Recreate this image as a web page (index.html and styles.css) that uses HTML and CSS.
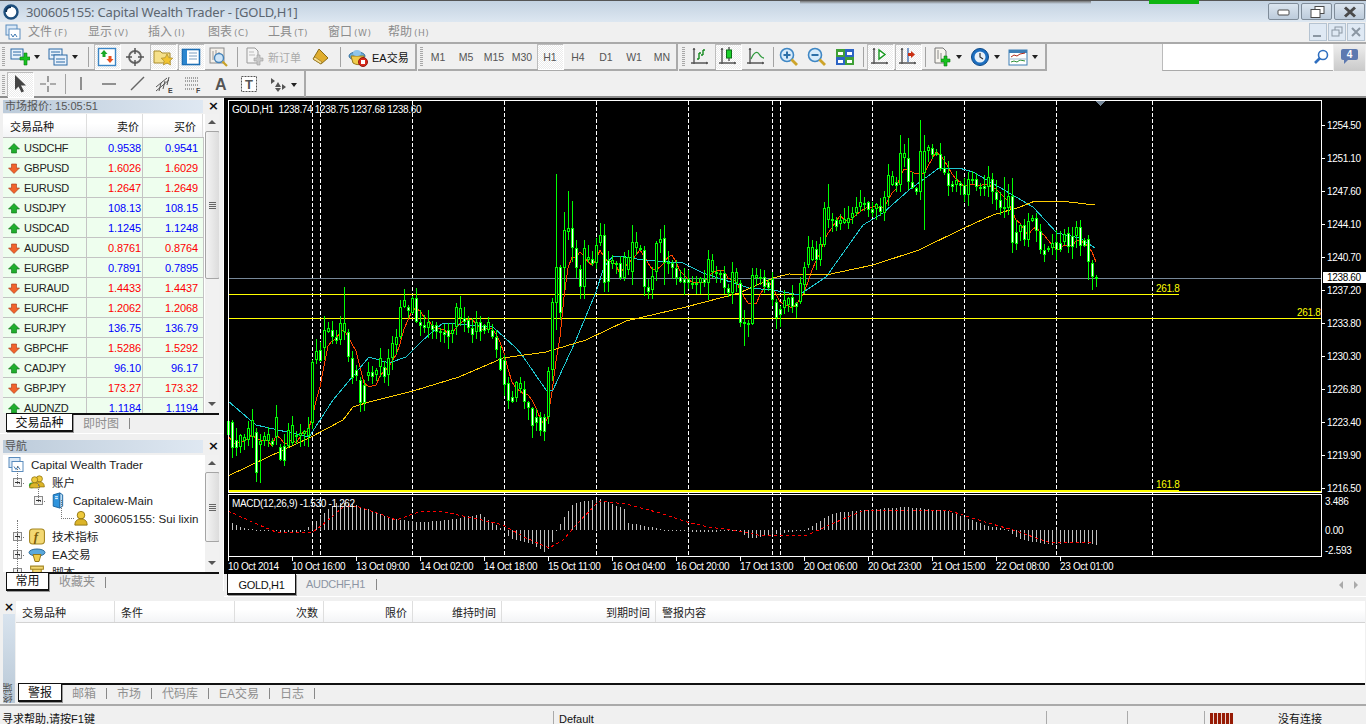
FILE: index.html
```html
<!DOCTYPE html>
<html>
<head>
  <title>Capital Wealth Trader</title>
  <meta charset="utf-8">
  <link rel="stylesheet" href="styles.css">
</head>
<body>
<svg class="defs" width="0" height="0">
  <symbol id="up" viewBox="0 0 12 11"><path d="M6 .5 11.500 6H8.500v4h-5V6H.5z" fill="#1fae2d" stroke="#0d6b18" stroke-width=".6"/></symbol>
  <symbol id="down" viewBox="0 0 12 11"><path d="M6 10.500 11.500 5H8.500V1h-5v4H.5z" fill="#f0642c" stroke="#a8381a" stroke-width=".6"/></symbol>
  <symbol id="minus" viewBox="0 0 9 9"><rect x=".5" y=".5" width="8" height="8" fill="#f4f4f4" stroke="#8a8a8a"/><path d="M2 4.500h5" stroke="#333"/></symbol>
  <symbol id="plus" viewBox="0 0 9 9"><rect x=".5" y=".5" width="8" height="8" fill="#f4f4f4" stroke="#8a8a8a"/><path d="M2 4.500h5M4.500 2v5" stroke="#333"/></symbol>
  <symbol id="person" viewBox="0 0 16 18"><circle cx="8" cy="5.500" r="4" fill="#eec93c" stroke="#8f7310"/><path d="M1.500 16c0-5 3-6.500 6.500-6.500s6.500 1.500 6.500 6.500z" fill="#dcb428" stroke="#8f7310"/></symbol>
  <symbol id="axes" viewBox="0 0 20 20"><path d="M4 1v16M1 16h17" stroke="#555" stroke-width="1.400" fill="none"/><path d="M4 1 2.500 3h3zM18 16l-2-1.500v3z" fill="#555"/></symbol>
</svg>

<div class="titlebar">
  <svg class="app-icon" viewBox="0 0 16 16"><circle cx="8" cy="8" r="6.500" fill="#fff" stroke="#1e4f7d" stroke-width="2.400"/><path d="M3 8a5 5 0 0 1 5-5" stroke="#0e3157" stroke-width="2" fill="none"/></svg>
  <span class="title">300605155: Capital Wealth Trader - [GOLD,H1]</span>
  <span class="top-shadow"></span>
  <span class="green-mark"></span>
  <div class="win-btns">
    <span class="win-btn"><svg viewBox="0 0 30 12"><rect x="9" y="4" width="11" height="5" rx="1" fill="#fff" stroke="#4a4a4a"/></svg></span>
    <span class="win-btn"><svg viewBox="0 0 30 12"><rect x="13" y="0.500" width="9" height="7" fill="#fff" stroke="#4a4a4a"/><rect x="9" y="3.500" width="9" height="8" fill="#fff" stroke="#4a4a4a"/></svg></span>
    <span class="win-btn"><svg viewBox="0 0 30 12"><path d="M10 1.500 20 10.500M20 1.500 10 10.500" stroke="#4a4a4a" stroke-width="3"/></svg></span>
  </div>
</div>

<div class="menubar">
  <svg class="doc-icon" viewBox="0 0 16 16"><rect x="1" y="1" width="11" height="10" fill="#dbe9f7" stroke="#5b8cbd"/><rect x="4" y="5" width="11" height="10" fill="#fff" stroke="#5b8cbd"/><path d="M6 10l2 3 2-3 2 3" stroke="#3d77b0" fill="none"/></svg>
  <span class="menu">文件<small>(F)</small></span>
  <span class="menu">显示<small>(V)</small></span>
  <span class="menu">插入<small>(I)</small></span>
  <span class="menu">图表<small>(C)</small></span>
  <span class="menu">工具<small>(T)</small></span>
  <span class="menu">窗口<small>(W)</small></span>
  <span class="menu">帮助<small>(H)</small></span>
  <div class="mdi-btns">
    <span class="mdi"><svg viewBox="0 0 16 16"><path d="M3 12h8" stroke="#8b97a3" stroke-width="2"/></svg></span>
    <span class="mdi"><svg viewBox="0 0 16 16"><rect x="6" y="3" width="7" height="6" fill="none" stroke="#8b97a3"/><rect x="3" y="6" width="7" height="6" fill="#dfe9f4" stroke="#8b97a3"/></svg></span>
    <span class="mdi"><svg viewBox="0 0 16 16"><path d="M4 4l8 8M12 4l-8 8" stroke="#8b97a3" stroke-width="2"/></svg></span>
  </div>
</div>

<div class="toolrow first">
  <div class="toolgroup g-main">
    <span class="grip"></span>
    <span class="tool"><svg viewBox="0 0 20 20"><rect x="1" y="2" width="12" height="10" fill="#e8f1fb" stroke="#2d6aa5"/><path d="M3 5h8M3 8h8" stroke="#2d6aa5"/><path d="M10 8h4v-4h3v4h3v3h-3v5h-3v-5h-4z" transform="translate(0 2)" fill="#17c21f" stroke="#0b7a12" stroke-width=".6"/></svg></span>
    <span class="dd"></span>
    <span class="tool"><svg viewBox="0 0 20 20"><rect x="1" y="2" width="13" height="10" fill="#e8f1fb" stroke="#2d6aa5"/><path d="M3 5h9M3 8h9" stroke="#2d6aa5"/><rect x="6" y="8" width="13" height="10" fill="#e8f1fb" stroke="#2d6aa5"/><path d="M8 12h9M8 15h9" stroke="#2d6aa5"/></svg></span>
    <span class="dd"></span>
    <span class="sep s11"></span>
    <span class="tool on"><svg viewBox="0 0 20 20"><rect x="1.500" y="1.500" width="17" height="17" fill="#fff" stroke="#3b86c6" stroke-width="1.400"/><path d="M7 3l3.500 4H8.500v3h-3V7H3.500z" fill="#19a928"/><path d="M13 16l3.500-4h-2V9h-3v3H9.500z" fill="#ea4f1f"/></svg></span>
    <span class="tool"><svg viewBox="0 0 20 20"><circle cx="10" cy="10" r="6" fill="none" stroke="#666" stroke-width="1.800"/><path d="M10 1v6M10 13v6M1 10h6M13 10h6" stroke="#555" stroke-width="1.500"/></svg></span>
    <span class="tool on"><svg viewBox="0 0 20 20"><path d="M1 4h6l2 2h8v10H1z" fill="#f5e08a" stroke="#a78a2c"/><path d="M14 7l1.800 3.700 4 .5-3 2.800.8 4-3.600-2-3.600 2 .8-4-3-2.800 4-.5z" fill="#f2c431" stroke="#a78a2c" stroke-width=".7"/></svg></span>
    <span class="tool on"><svg viewBox="0 0 20 20"><rect x="1.500" y="2.500" width="17" height="15" fill="#fff" stroke="#1d6fb5" stroke-width="1.600"/><rect x="2" y="3" width="4" height="14" fill="#2b86cf"/><path d="M8 6h8M8 9h8M8 12h8" stroke="#7d9fc0"/></svg></span>
    <span class="tool"><svg viewBox="0 0 20 20"><rect x="1" y="1" width="14" height="15" fill="#f4f0ea" stroke="#8a8a8a"/><path d="M4 4v9M7 3v8M10 5v6" stroke="#999"/><circle cx="10" cy="11" r="4.500" fill="#cfe5f7" stroke="#4784b9" stroke-width="1.400"/><path d="M13.500 14.500 18 19" stroke="#c9a227" stroke-width="2.200"/></svg></span>
    <span class="sep s7"></span>
    <span class="tool"><svg viewBox="0 0 20 20"><path d="M3 1h8l3 3v12H3z" fill="#f4f4f4" stroke="#999"/><path d="M5 5h5M5 8h6" stroke="#bbb"/><path d="M10 11h3V8h3v3h3v3h-3v4h-3v-4h-3z" fill="#c9c9c9" stroke="#9a9a9a" stroke-width=".6"/></svg></span>
    <span class="tool-label dim">新订单</span>
    <span class="tool"><svg viewBox="0 0 20 20"><path d="M8 2l9 9-7 6-8-5z" fill="#e0ad2e" stroke="#8a6a14"/><path d="M2 12l8 5 1-2-7-5z" fill="#f6dd8f" stroke="#8a6a14" stroke-width=".6"/></svg></span>
    <span class="sep s9"></span>
    <span class="tool"><svg viewBox="0 0 20 20"><ellipse cx="9" cy="9" rx="8" ry="4" fill="#6bb0de" stroke="#2c6a99"/><path d="M3 9l2 7c3 2 7 2 9 1l2-8z" fill="#efcb4a" stroke="#96791a"/><ellipse cx="9" cy="6" rx="4" ry="3" fill="#8fc5ea"/><circle cx="15" cy="15" r="4.500" fill="#d8291c" stroke="#8f1a12"/><rect x="13" y="13" width="4" height="4" fill="#fff"/></svg></span>
    <span class="tool-label ea">EA交易</span>
  </div>
  <div class="toolgroup g-period">
    <span class="grip"></span>
    <span class="period">M1</span><span class="period">M5</span><span class="period">M15</span><span class="period">M30</span><span class="period on">H1</span><span class="period">H4</span><span class="period">D1</span><span class="period">W1</span><span class="period">MN</span>
  </div>
  <div class="toolgroup g-chart">
    <span class="grip"></span>
    <span class="tool"><svg viewBox="0 0 20 20"><use href="#axes"/><path d="M9 12V6M9 12H7M9 6h2M13 8V3M13 8h-2M13 3h2" stroke="#138a1e" stroke-width="1.400" fill="none"/></svg></span>
    <span class="tool on"><svg viewBox="0 0 20 20"><use href="#axes"/><path d="M11 0v14" stroke="#111"/><rect x="8.500" y="3" width="5" height="8" fill="#1bd02a" stroke="#0e6e18"/></svg></span>
    <span class="tool"><svg viewBox="0 0 20 20"><use href="#axes"/><path d="M5 12C8 5 11 4 13 7s3 4 5 4" stroke="#2f9a3c" stroke-width="1.300" fill="none"/></svg></span>
    <span class="sep s5"></span>
    <span class="tool"><svg viewBox="0 0 20 20"><circle cx="8" cy="8" r="6.500" fill="#d6eafa" stroke="#3f87c4" stroke-width="1.600"/><path d="M4.500 8h7M8 4.500v7" stroke="#2c6fa8" stroke-width="2"/><path d="M12.500 12.500 18 18" stroke="#cda42a" stroke-width="2.800"/></svg></span>
    <span class="tool"><svg viewBox="0 0 20 20"><circle cx="8" cy="8" r="6.500" fill="#d6eafa" stroke="#3f87c4" stroke-width="1.600"/><path d="M4.500 8h7" stroke="#2c6fa8" stroke-width="2"/><path d="M12.500 12.500 18 18" stroke="#cda42a" stroke-width="2.800"/></svg></span>
    <span class="tool"><svg viewBox="0 0 20 20"><rect x="1" y="2" width="9" height="8" fill="#3fa037"/><rect x="10" y="2" width="9" height="8" fill="#2d64c4"/><rect x="1" y="10" width="9" height="8" fill="#2d64c4"/><rect x="10" y="10" width="9" height="8" fill="#3fa037"/><path d="M3 5h5v3H3zM12 5h5v3h-5zM3 13h5v3H3zM12 13h5v3h-5z" fill="#fff"/></svg></span>
    <span class="sep s7"></span>
    <span class="tool on"><svg viewBox="0 0 20 20"><use href="#axes"/><path d="M9 3v9l6-4.500z" fill="#fff" stroke="#16991f" stroke-width="1.400"/></svg></span>
    <span class="tool on"><svg viewBox="0 0 20 20"><use href="#axes"/><path d="M10 1v14" stroke="#2a5ea8" stroke-width="1.200"/><path d="M10 6h3V4l4 3.500-4 3.500V9h-3z" fill="#c92f12"/></svg></span>
    <span class="sep s6"></span>
    <span class="tool"><svg viewBox="0 0 20 20"><path d="M3 1h8l3 3v12H3z" fill="#f7f5ef" stroke="#777"/><path d="M6 3v9M9 6v6" stroke="#888"/><path d="M9 12h3V9h3v3h3v3h-3v4h-3v-4H9z" fill="#17c21f" stroke="#0b7a12" stroke-width=".6"/></svg></span>
    <span class="dd tight"></span>
    <span class="tool"><svg viewBox="0 0 20 20"><circle cx="10" cy="10" r="8.500" fill="#1d6fc0" stroke="#0e4a87"/><circle cx="10" cy="10" r="5.500" fill="#e8f1f8"/><path d="M10 6v4l3 2" stroke="#333" stroke-width="1.200" fill="none"/></svg></span>
    <span class="dd"></span>
    <span class="tool"><svg viewBox="0 0 20 20"><rect x="1" y="3" width="18" height="15" fill="#fff" stroke="#3d7eb5"/><rect x="1" y="3" width="18" height="3" fill="#3d7eb5"/><path d="M3 10l3-2 3 1 3-2 5-1" stroke="#b02a1a" fill="none"/><path d="M3 15l3-1 3 1 3-2 5 1" stroke="#2c8f37" fill="none"/><path d="M1 12h18" stroke="#9fb9cf"/></svg></span>
    <span class="dd"></span>
  </div>
  <span class="row-fill"></span>
  <div class="search">
    <svg viewBox="0 0 16 16"><circle cx="10" cy="6" r="4.500" fill="#fff" stroke="#2f6fc0" stroke-width="1.600"/><path d="M7 9 2 14" stroke="#2f6fc0" stroke-width="2.600"/></svg>
  </div>
  <div class="chat">
    <span class="bubble">4</span>
  </div>
</div>

<div class="toolrow second">
  <div class="toolgroup g-draw">
    <span class="grip"></span>
    <span class="tool on"><svg viewBox="0 0 20 20"><path d="M5 1v15l3.500-3.500 3 6 2.500-1.200-3-5.800H16z" fill="#444"/></svg></span>
    <span class="tool"><svg viewBox="0 0 20 20"><path d="M10 2v6M10 12v6M2 10h6M12 10h6" stroke="#666" stroke-width="1.200"/></svg></span>
    <span class="sep s5"></span>
    <span class="tool"><svg viewBox="0 0 20 20"><path d="M10 3v13" stroke="#666" stroke-width="1.400"/></svg></span>
    <span class="tool"><svg viewBox="0 0 20 20"><path d="M3 10h14" stroke="#666" stroke-width="1.400"/></svg></span>
    <span class="tool"><svg viewBox="0 0 20 20"><path d="M4 16 17 3" stroke="#666" stroke-width="1.400"/></svg></span>
    <span class="tool"><svg viewBox="0 0 20 20"><path d="M1 13 12 4M1 17 14 6M4 17 6 9M8 15l2-8M12 11l2-8" stroke="#555" fill="none"/><text class="mini" x="13" y="19">E</text></svg></span>
    <span class="tool"><svg viewBox="0 0 20 20"><path d="M2 4h14M2 7h14M2 11h14M2 15h10" stroke="#555" stroke-dasharray="1 1"/><text class="mini" x="13" y="19">F</text></svg></span>
    <span class="tool"><svg viewBox="0 0 20 20"><text class="big-a" x="4" y="16">A</text></svg></span>
    <span class="tool"><svg viewBox="0 0 20 20"><rect x="2.500" y="2.500" width="15" height="15" fill="#fff" stroke="#555" stroke-dasharray="2 1"/><text class="big-t" x="6" y="15">T</text></svg></span>
    <span class="tool"><svg viewBox="0 0 20 20"><path d="M4 4l4 3-4 3zM11 8l3 5h-6zM8 14h6l-3 4zM15 10l4 3-4 3z" fill="#555"/></svg></span>
    <span class="dd"></span>
  </div>
</div>

<div class="workspace">
  <div class="left">
    <div class="panel market">
      <div class="panel-head"><span class="panel-title">市场报价: 15:05:51</span><span class="close">×</span></div>
      <div class="panel-body">
        <div class="list">
          <div class="mw-head"><span>交易品种</span><span class="r">卖价</span><span class="r">买价</span></div>
          <div class="mw-rows">
            <div class="mw-row"><span class="sym"><svg><use href="#up"/></svg>USDCHF</span><span class="px bl">0.9538</span><span class="px bl">0.9541</span></div>
            <div class="mw-row"><span class="sym"><svg><use href="#down"/></svg>GBPUSD</span><span class="px rd">1.6026</span><span class="px rd">1.6029</span></div>
            <div class="mw-row"><span class="sym"><svg><use href="#down"/></svg>EURUSD</span><span class="px rd">1.2647</span><span class="px rd">1.2649</span></div>
            <div class="mw-row"><span class="sym"><svg><use href="#up"/></svg>USDJPY</span><span class="px bl">108.13</span><span class="px bl">108.15</span></div>
            <div class="mw-row"><span class="sym"><svg><use href="#up"/></svg>USDCAD</span><span class="px bl">1.1245</span><span class="px bl">1.1248</span></div>
            <div class="mw-row"><span class="sym"><svg><use href="#down"/></svg>AUDUSD</span><span class="px rd">0.8761</span><span class="px rd">0.8764</span></div>
            <div class="mw-row"><span class="sym"><svg><use href="#up"/></svg>EURGBP</span><span class="px bl">0.7891</span><span class="px bl">0.7895</span></div>
            <div class="mw-row"><span class="sym"><svg><use href="#down"/></svg>EURAUD</span><span class="px rd">1.4433</span><span class="px rd">1.4437</span></div>
            <div class="mw-row"><span class="sym"><svg><use href="#down"/></svg>EURCHF</span><span class="px rd">1.2062</span><span class="px rd">1.2068</span></div>
            <div class="mw-row"><span class="sym"><svg><use href="#up"/></svg>EURJPY</span><span class="px bl">136.75</span><span class="px bl">136.79</span></div>
            <div class="mw-row"><span class="sym"><svg><use href="#down"/></svg>GBPCHF</span><span class="px rd">1.5286</span><span class="px rd">1.5292</span></div>
            <div class="mw-row"><span class="sym"><svg><use href="#up"/></svg>CADJPY</span><span class="px bl">96.10</span><span class="px bl">96.17</span></div>
            <div class="mw-row"><span class="sym"><svg><use href="#down"/></svg>GBPJPY</span><span class="px rd">173.27</span><span class="px rd">173.32</span></div>
            <div class="mw-row"><span class="sym"><svg><use href="#up"/></svg>AUDNZD</span><span class="px bl">1.1184</span><span class="px bl">1.1194</span></div>
          </div>
        </div>
        <div class="scrollbar tall"><span class="sb-up"></span><span class="sb-thumb"><i></i></span><span class="sb-fill"></span><span class="sb-down"></span></div>
      </div>
      <div class="tabs"><span class="tab on t67">交易品种</span><span class="tab">即时图</span><span class="tab-sep"></span></div>
    </div>

    <div class="panel nav">
      <div class="panel-head"><span class="panel-title">导航</span><span class="close">×</span></div>
      <div class="panel-body">
        <div class="tree">
          <div class="node lv0"><svg class="ti" viewBox="0 0 16 16"><rect x="1" y="1" width="11" height="10" fill="#dbe9f7" stroke="#5b8cbd"/><rect x="4" y="5" width="11" height="10" fill="#fff" stroke="#5b8cbd"/><path d="M6 10l2 3 2-3 2 3" stroke="#3d77b0" fill="none"/></svg>Capital Wealth Trader</div>
          <div class="node lv1"><svg class="ex"><use href="#minus"/></svg><svg class="ti" viewBox="0 0 18 18"><use href="#person" x="5" width="13" height="16"/><circle cx="3.500" cy="12" r="3" fill="#28a92f"/><use href="#person" x="0" y="1" width="13" height="16"/></svg>账户</div>
          <div class="node lv2"><svg class="ex"><use href="#minus"/></svg><svg class="ti" viewBox="0 0 16 18"><path d="M4 3l7-2v16l-7-2z" fill="#2f94dd" stroke="#1763a0"/><path d="M11 1l3 2v12l-3 2z" fill="#bfe0f7" stroke="#1763a0"/><path d="M6 5h3M6 7h3" stroke="#fff"/></svg>Capitalew-Main</div>
          <div class="node lv3"><svg class="ti" viewBox="0 0 16 18"><use href="#person"/></svg>300605155: Sui lixin</div>
          <div class="node lv1"><svg class="ex"><use href="#plus"/></svg><svg class="ti" viewBox="0 0 16 16"><rect x="1" y="1" width="14" height="14" rx="3" fill="#f3d872" stroke="#a48520"/><text class="fx" x="5" y="12">f</text></svg>技术指标</div>
          <div class="node lv1"><svg class="ex"><use href="#plus"/></svg><svg class="ti wide" viewBox="0 0 18 16"><ellipse cx="9" cy="6" rx="8" ry="3.500" fill="#5aa8dc" stroke="#2c6a99"/><path d="M5 8l2 7h4l2-7z" fill="#efcb4a" stroke="#96791a"/></svg>EA交易</div>
          <div class="node lv1"><svg class="ex"><use href="#plus"/></svg><svg class="ti" viewBox="0 0 16 16"><path d="M2 2h12v3H2zM4 5h8v9H4z" fill="#f3d872" stroke="#a48520"/></svg>脚本</div>
        </div>
        <div class="scrollbar short"><span class="sb-up"></span><span class="sb-thumb"><i></i></span><span class="sb-fill"></span><span class="sb-down"></span></div>
      </div>
      <div class="tabs"><span class="tab on t43">常用</span><span class="tab">收藏夹</span><span class="tab-sep"></span></div>
    </div>
  </div>

  <div class="right">
    <div class="chart" id="chart"></div>
    <div class="chart-tabs">
      <span class="ctab on">GOLD,H1</span><span class="ctab">AUDCHF,H1</span><span class="tab-sep"></span>
      <span class="ctab-arrows"><i class="al"></i><i class="ar"></i></span>
    </div>
  </div>
</div>

<div class="terminal">
  <div class="term-side">
    <span class="close">×</span>
    <span class="term-strip"><b>终端</b></span>
  </div>
  <div class="term-main">
    <div class="term-head">
      <span class="c1">交易品种</span><span class="c2">条件</span><span class="c3 r">次数</span><span class="c3 r">限价</span><span class="c3 r">维持时间</span><span class="c4 r">到期时间</span><span class="c5">警报内容</span>
    </div>
    <div class="term-body"></div>
    <div class="tabs">
      <span class="tab on t44">警报</span><span class="tab">邮箱</span><span class="tab-sep"></span><span class="tab">市场</span><span class="tab-sep"></span><span class="tab">代码库</span><span class="tab-sep"></span><span class="tab">EA交易</span><span class="tab-sep"></span><span class="tab">日志</span><span class="tab-sep"></span>
    </div>
  </div>
</div>

<div class="statusbar">
  <span class="st st-help">寻求帮助,请按F1键</span>
  <span class="st st-profile">Default</span>
  <span class="st st-a"></span>
  <span class="st st-b"></span>
  <span class="st st-conn"><span class="conn-bars"></span><span>没有连接</span></span>
</div>

<script src="chart.js"></script>
</body>
</html>
```

FILE: styles.css
```css
* {box-sizing: border-box;}
html, body {height: 724px; overflow: hidden;}
body {
  margin: 0;
  background: #f0f0f0;
  color: #111;
  font-family: "Liberation Sans", "Noto Sans CJK SC", sans-serif;
  font-size: 12px;
}
.defs {position: absolute;}
svg {display: block;}

/* title + menu */
.titlebar {
  height: 22px;
  display: flex;
  align-items: center;
  position: relative;
  border-top: 1px solid #555;
  background: linear-gradient(#c3d2e1, #dde7f1);
}
.app-icon {width: 16px; height: 16px; margin-left: 3px;}
.title {margin-left: 7px; color: #5c6670; font-size: 13px; font-family: "Noto Sans", sans-serif; letter-spacing: -.2px;}
.top-shadow {position: absolute; left: 800px; top: 0; width: 291px; height: 3px; background: linear-gradient(#777, transparent);}
.green-mark {position: absolute; left: 1149px; top: -1px; width: 50px; height: 4px; background: #0fb512;}
.win-btns {margin-left: auto; margin-right: 1px; display: flex; gap: 2px;}
.win-btn {
  width: 31px; height: 17px;
  border: 1px solid #7f8c99; border-radius: 2px;
  background: linear-gradient(#dbe5ef, #bccbdb);
  padding-top: 2px;
}
.win-btn svg {width: 30px; height: 12px;}
.menubar {
  height: 20px;
  display: flex;
  align-items: center;
  padding-left: 5px;
  padding-bottom: 1px;
}
.menubar .menu {position: relative; top: -1px;}
.doc-icon {width: 16px; height: 16px; margin-right: 7px;}
.menu {width: 60px; color: #8c8c8c; font-size: 12px; white-space: nowrap;}
.menu small {font-family: "DejaVu Sans", sans-serif; font-size: 9px; margin-left: 2px; letter-spacing: .5px;}
.mdi-btns {margin-left: auto; margin-right: 1px; display: flex; gap: 1px;}
.mdi {width: 18px; height: 18px; border: 1px solid #b5c3d1; background: #dfe9f4;}
.mdi svg {width: 16px; height: 16px;}

/* toolbars */
.toolrow {display: flex; align-items: stretch;}
.toolrow.first {height: 29px; border-top: 2px solid #aaa;}
.toolrow.second {height: 26px; border-bottom: 0;}
.toolgroup {display: flex; align-items: center; border-right: 2px solid #aaa; border-bottom: 2px solid #aaa;}
.toolrow.second .toolgroup {border-bottom: 0;}
.g-main {width: 417px; padding-left: 6px; margin-right: 1px;}
.g-period {width: 260px; padding-left: 6px; margin-right: 1px;}
.g-chart {width: 368px; padding-left: 7px;}
.g-draw {width: 306px; padding-left: 6px;}
.grip {
  position: relative;
  width: 0; height: 19px;
}
.grip::before {
  content: ""; position: absolute; left: -4px; top: 0;
  width: 3px; height: 19px;
  background: repeating-linear-gradient(#a8a8a8 0 1px, transparent 1px 2px);
}
.tool {width: 28px; height: 25px; flex: none; display: flex; align-items: center; justify-content: center;}
.tool svg {width: 20px; height: 20px;}
.tool.on, .period.on {
  background: repeating-conic-gradient(#fff 0 25%, #ebebeb 0 50%) 0 0/2px 2px;
  box-shadow: inset 1px 1px 0 #bdbdbd, 1px 1px 0 #fff;
}
.tool.on {width: 26px; margin: 0 1px;}
.dd {position: relative; width: 10px; height: 25px; flex: none;}
.dd::after {
  content: ""; position: absolute; left: 0; top: 11px;
  border: 3px solid transparent; border-top: 4px solid #222; border-bottom: 0;
}
.dd.tight::after {left: 0;}
.sep {flex: none; height: 20px; position: relative;}
.sep::before {content: ""; position: absolute; left: 50%; top: 0; width: 1px; height: 20px; background: #a3a3a3;}
.s5 {width: 5px;}
.s6 {width: 6px;}
.s7 {width: 7px;}
.s9 {width: 9px;}
.s11 {width: 11px;}
.tool-label {flex: none; font-size: 11px; white-space: nowrap;}
.dim {width: 39px; color: #aaa; font-size: 11px;}
.ea {width: 44px;}
.period {width: 28px; height: 25px; flex: none; display: flex; align-items: center; justify-content: center; font-size: 10.500px; color: #555;}
.period.on {width: 26px; margin: 0 1px;}
.row-fill {flex: 1;}
.search {
  width: 171px;
  background: #fff;
  border-left: 1px solid #bbb;
  border-bottom: 1px solid #aaa;
  display: flex;
  align-items: center;
  justify-content: flex-end;
  padding-right: 4px;
}
.search svg {width: 16px; height: 16px;}
.chat {
  width: 31px; margin: 0 1px;
  background: linear-gradient(#eee, #c9c9c9);
  display: flex; justify-content: center; padding-top: 5px;
}
.bubble {
  width: 17px; height: 11px; border-radius: 2px;
  background: #5d79b0; color: #fff;
  font: bold 10px/11px "Liberation Sans", sans-serif; text-align: center;
  position: relative;
}
.bubble::after {
  content: ""; position: absolute; left: 3px; top: 11px;
  border-top: 4px solid #5d79b0; border-right: 4px solid transparent;
}

/* workspace */
.workspace {
  height: 501px;
  display: flex;
  border-top: 2px solid #8c8c8c;
  margin-top: -1px;
}
.left {width: 224px; flex: none;}
.right {flex: 1; min-width: 0;}
.panel {display: flex; flex-direction: column; padding-left: 3px; padding-right: 4px; border-right: 1px solid #fff;}
.market {height: 336px; border-bottom: 1px solid #fff; margin-bottom: 4px;}
.nav {height: 153px;}
.panel-head {height: 15px; flex: none; display: flex; align-items: center; padding-top: 1px; position: relative;}
.panel-title {
  width: 203px; height: 13px; padding-left: 2px;
  background: linear-gradient(90deg, #bccbda, #dfe8f2);
  color: #555; font-size: 11px; line-height: 13px;
  white-space: nowrap;
}
.close {font: bold 13px/12px "DejaVu Sans", sans-serif; margin-left: 5px; color: #111;}
.panel-body {flex: 1; min-height: 0; display: flex; background: #fff; overflow: hidden;}
.market .panel-body {margin-top: 1px;}
.nav .panel-body {margin-top: 2px;}
.list {width: 201px; flex: none;}
.mw-head {
  height: 24px; display: grid; grid-template-columns: 84px 56px 60px;
  align-items: start;
  background: linear-gradient(#fff 40%, #f3f4f6);
  border-bottom: 1px solid #bdbdbd;
  font-size: 11px;
}
.mw-head span {padding: 0 7px; height: 23px; border-right: 1px solid #dedede; line-height: 26px;}
.mw-head .r {text-align: right; padding-right: 3px;}
.mw-head .r:last-child {padding-right: 6px;}
.mw-rows {height: 275px; overflow: hidden;}
.mw-row {
  height: 20px; display: grid; grid-template-columns: 84px 56px 59px;
  background: #eefeee;
  border-bottom: 1px solid #c4c4c4;
  border-right: 1px solid #c4c4c4;
  font-size: 11px; line-height: 21px;
}
.sym {display: flex; align-items: flex-start; border-right: 1px solid #c4c4c4; padding-left: 5px; letter-spacing: -.25px; color: #222;}
.sym svg {width: 12px; height: 11px; margin-top: 5px; margin-right: 4px;}
.px {text-align: right; padding-right: 1px; border-right: 1px solid #c4c4c4; letter-spacing: -.1px;}
.px:last-child {border-right: 0; padding-right: 4px;}
.bl {color: #0000ff;}
.rd {color: #ff0000;}

.scrollbar {width: 15px; margin-left: 1px; flex: none; display: flex; flex-direction: column; background: #f1f1f1;}
.sb-up, .sb-down {height: 17px; flex: none; position: relative;}
.sb-up::after, .sb-down::after {content: ""; position: absolute; left: 3px; top: 6px; border: 4px solid transparent;}
.sb-up::after {border-bottom: 4px solid #555; border-top: 0;}
.sb-down::after {border-top: 4px solid #555; border-bottom: 0;}
.sb-thumb {
  display: flex; align-items: center; justify-content: center;
  background: linear-gradient(90deg, #f4f4f4, #dcdcdc);
  border: 1px solid #a5a5a5; border-radius: 2px;
}
.sb-thumb i {width: 7px; height: 7px; background: repeating-linear-gradient(#666 0 1px, transparent 1px 2px);}
.sb-fill {flex: 1;}
.tall .sb-thumb {height: 148px;}
.short .sb-thumb {height: 70px;}

.tabs {
  height: 19px; flex: none;
  display: flex; align-items: flex-start;
  border-top: 2px solid #111;
  margin-left: 3px;
  background: #f0f0f0;
  font-size: 12px; line-height: 17px;
  color: #8f8f8f;
}
.market .tabs {height: 20px; line-height: 19px;}
.tab {padding: 0 10px; flex: none;}
.tab-sep {width: 1px; height: 11px; margin-top: 3px; background: #888; flex: none;}
.tab.on {
  color: #111; background: #fff; text-align: center; padding: 0;
  height: 18px; margin-top: -1px;
  border-left: 1px solid #111; border-right: 1px solid #111; border-bottom: 2px solid #111;
  box-shadow: 1px 1px 0 #999;
}
.t67 {width: 67px;}
.t43 {width: 43px;}
.t44 {width: 44px;}

/* tree */
.tree {width: 201px; flex: none; overflow: hidden; font-size: 11.600px;}
.node {height: 18px; display: flex; align-items: center; white-space: nowrap; position: relative; color: #222;}
.lv0 {padding-left: 5px;}
.lv1 {padding-left: 10px;}
.lv2 {padding-left: 31px;}
.lv3 {padding-left: 70px;}
.ex {width: 9px; height: 9px; margin-right: 6px; flex: none;}
.ti {width: 16px; height: 17px; flex: none; margin-right: 5px;}
.lv0 .ti {margin-right: 7px;}
.lv1 .ti {width: 18px; margin-right: 6px;}
.lv2 .ti {margin-right: 8px;}
.lv3 .ti {margin-right: 5px;}
.node::before {content: ""; position: absolute; border-left: 1px dotted #777; border-bottom: 1px dotted #777;}
.lv1::before {left: 14px; top: -7px; width: 6px; height: 17px;}
.lv2::before {left: 35px; top: -7px; width: 6px; height: 17px;}
.lv3::before {left: 58px; top: -9px; width: 12px; height: 18px;}
.lv0::before {display: none;}
.mini {font: bold 7px "Liberation Sans", sans-serif; fill: #444;}
.big-a {font: bold 16px "Liberation Sans", sans-serif; fill: #555;}
.big-t {font: bold 13px "Liberation Sans", sans-serif; fill: #555;}
.fx {font: italic bold 12px "Liberation Serif", serif; fill: #7a5c0a;}

/* chart */
.chart {height: 476px; background: #000; position: relative;}
.chart svg {position: absolute; left: 0; top: 0; width: 100%; height: 100%;}
.chart text {font: 10px "Liberation Sans", sans-serif; fill: #fff; letter-spacing: -.33px;}
.chart text.lvl {fill: #ffff00;}
.chart text.now {fill: #000;}
.chart-tabs {
  height: 23px; display: flex; align-items: flex-start;
  border-bottom: 1px solid #fff;
  font-size: 11px; line-height: 20px; color: #8c95a3;
  position: relative;
}
.ctab {padding: 0 10px; letter-spacing: -.3px;}
.ctab.on {
  width: 69px; margin-left: 3px; padding: 1px 0 0; text-align: center; color: #111;
  height: 21px; background: #fff;
  border-left: 1px solid #111; border-right: 1px solid #111; border-bottom: 2px solid #111;
  box-shadow: 1px 1px 0 #999;
}
.chart-tabs .tab-sep {margin-left: 1px; margin-top: 5px;}
.ctab-arrows {position: absolute; right: 8px; top: 7px; display: flex; gap: 11px;}
.ctab-arrows i {display: block; border: 4px solid transparent;}
.al {border-right: 4px solid #aaa !important; border-left: 0 !important;}
.ar {border-left: 4px solid #aaa !important; border-right: 0 !important;}

/* terminal */
.terminal {height: 109px; display: flex; padding-top: 4px; border-bottom: 2px solid #aaa;}
.term-side {width: 16px; flex: none; padding-left: 3px; display: flex; flex-direction: column;}
.term-side .close {margin-left: 1px; height: 14px; font-size: 12px;}
.term-strip {
  width: 12px; height: 89px; margin-top: -1px;
  background: linear-gradient(#d8e3ee, #b9c8d6);
  display: flex; align-items: flex-end; justify-content: center;
  overflow: hidden;
}
.term-strip b {font-weight: normal; font-size: 10px; line-height: 12px; writing-mode: vertical-rl; color: #555; transform: rotate(180deg);}
.term-main {flex: 1; min-width: 0; display: flex; flex-direction: column; padding-right: 1px;}
.term-head {
  height: 22px; flex: none; display: flex;
  background: linear-gradient(#fff 40%, #f3f4f6);
  border-bottom: 1px solid #d3d3d3;
  font-size: 11px; line-height: 24px; color: #222;
}
.term-head span {padding: 0 5px 0 6px; height: 21px; border-right: 1px solid #dedede; flex: none;}
.term-head .r {text-align: right;}
.c1 {width: 99px;}
.c2 {width: 120px;}
.c3 {width: 89px;}
.c4 {width: 154px;}
.term-head .c5 {border-right: 0;}
.term-body {flex: 1; background: #fff;}
.terminal .tabs {margin-left: 2px; margin-right: 0; height: 21px; line-height: 18px; font-size: 12px;}

/* status */
.statusbar {height: 18px; display: flex; padding-top: 5px; font-size: 11px; overflow: hidden;}
.st {padding-left: 5px; border-left: 1px solid #aaa; flex: none; height: 30px; line-height: 16px; white-space: nowrap;}
.st-help {width: 553px; border-left: 0; padding-left: 2px;}
.st-profile {width: 493px;}
.st-a {width: 81px;}
.st-b {width: 77px;}
.st-conn {display: flex; flex: 1;}
.conn-bars {
  width: 23px; height: 12px; margin-top: 2px; margin-right: 45px;
  background: repeating-linear-gradient(90deg, #971b05 0 3px, #e8d4cf 3px 4px);
}
```

FILE: chart.js
```js
// candle bodies as "top,bottom" in screen pixels, one every 4px starting at the key x
const bodies = {
  228: "421,435 422,448 440,448 435,447 437,441 428,440 420,437 432,473 441,445 436,441 434,441 441,445 417,437 447,460 446,461 430,446 425,443 435,437 433,436 431,434 428,436",
  312: "362,423 351,360 350,361 330,348 328,332 330,337 337,341 323,340 323,332 332,357 358,378 370,376 380,403 385,403 372,376 372,377 370,375 358,367 367,377 358,375 343,358 337,345 307,337 300,307 307,311 298,313 298,322",
  420: "322,326 325,328 322,328 325,330 325,332 331,333 332,335 330,337 330,334 307,327 308,318 318,322 320,328 328,335 322,332 322,332 325,331 322,330 330,337 337,350",
  500: "358,370 360,385 383,401 397,402 382,398 383,389 389,402 402,408 408,426 417,423 417,431 417,432 371,417",
  552: "302,370 267,303 267,313 230,268 228,232 228,248 248,268 269,287 248,287 257,260 259,264 245,263 235,243 235,283 260,282 260,264 263,265 263,278 257,278",
  628: "257,270 242,272 242,248 248,250 250,287 287,292 276,290 243,272 239,243 238,263 262,264 263,268 268,278 277,282 279,283 279,283 283,284 283,284 278,283 279,283 259,283 260,272 272,273 273,274 273,288 288,293 272,293 272,283 283,323 322,323 323,324 275,324 275,278 277,278 277,287 282,288 279,300 302,318 309,315 300,308 298,305 297,307 303,307 283,302 267,285 247,265 247,260 249,260 244,260 208,245 207,220 219,220 220,227 220,224 219,223 218,223 213,218 207,213 202,207 203,205 202,210 209,213 204,209 206,212 197,213 175,197 176,185 182,186 153,185 153,158 158,182 182,188 188,192 151,192 151,173 147,151 148,155 153,154 154,169 168,173 173,186 184,187 180,185 183,186 185,195 179,195 179,180 179,187 187,188 186,189 177,187 179,192 192,200 200,208 207,208 196,208 196,243 232,244 225,232 225,240 221,240 218,221 218,231 231,250 250,255 248,250 243,248 242,250 243,250 234,242 233,247 236,247 227,236 227,246 240,246 239,262 263,277 277,278"
};

// wicks that stick out, x: [high, low]
const wicks = {
  256: [428, 482], 260: [434, 483], 276: [405, 445], 324: [316, 360], 340: [316, 345], 344: [287, 340],
  556: [174, 330], 564: [212, 290], 568: [191, 240], 572: [201, 262], 632: [225, 285], 664: [225, 285],
  708: [250, 300], 740: [280, 327], 744: [310, 346], 748: [320, 337], 752: [268, 325],
  828: [184, 228], 900: [135, 192], 908: [138, 190], 920: [120, 200], 924: [135, 230],
  1004: [177, 218], 1012: [178, 253], 1076: [221, 248], 1088: [235, 280], 1092: [260, 290], 1096: [275, 287]
};

const yellowLine = [[228,476],[268,457],[309,438],[343,420],[353,407],[369,402],[413,391],[459,377],[503,358],[546,352],[586,340],[626,321],[686,307],[739,293],[773,278],[789,274],[826,275],[873,265],[919,250],[964,228],[993,215],[1020,207],[1035,201],[1060,201],[1095,205]];
const cyanLine = [[228,401],[256,425],[309,437],[333,400],[369,357],[389,363],[406,357],[423,340],[443,323],[493,327],[516,348],[522,355],[546,390],[553,390],[576,340],[596,292],[604,267],[613,256],[626,257],[643,260],[683,263],[703,273],[749,288],[773,290],[799,295],[826,277],[863,225],[883,213],[909,190],[939,168],[959,168],[973,172],[999,187],[1033,207],[1057,233],[1080,238],[1095,248]];
const histKeys = [[228,521],[240,527],[260,531],[300,532],[312,525],[320,516],[335,503],[345,503],[355,505],[370,508],[385,516],[400,520],[420,520],[440,521],[460,518],[480,514],[500,510],[520,509],[560,512],[600,518],[640,525],[660,529],[672,531],[700,532],[739,531],[749,539],[768,535],[805,530],[824,518],[834,513],[862,510],[904,507],[947,511],[966,518],[985,525],[1008,530],[1018,539],[1051,545],[1074,542],[1098,545]];
const histEarly = [[228,521],[240,527],[260,531],[300,532],[312,525],[320,516],[335,503],[345,503],[355,505],[370,510],[385,516],[400,520],[420,522],[440,521],[460,518],[480,514],[503,530],[510,538],[530,543],[546,553],[553,540],[556,531],[561,522],[573,503],[600,499],[626,510]];
const signalLine = [[228,511],[259,525],[276,532],[313,532],[326,522],[343,507],[356,506],[383,515],[396,520],[419,512],[439,511],[473,518],[503,525],[526,538],[549,548],[563,540],[576,525],[599,501],[626,504],[660,513],[687,522],[708,527],[739,531],[758,535],[808,535],[829,525],[862,511],[909,510],[947,510],[985,522],[1013,530],[1051,543],[1093,542]];
const separators = [312,320,412,504,596,688,772,780,872,964,1056,1152];
const prices = ["1254.50","1251.10","1247.60","1244.10","1240.70","1237.20","1233.80","1230.30","1226.80","1223.40","1219.90","1216.50"];
const times = ["10 Oct 2014","10 Oct 16:00","13 Oct 09:00","14 Oct 02:00","14 Oct 18:00","15 Oct 11:00","16 Oct 04:00","16 Oct 20:00","17 Oct 13:00","20 Oct 06:00","20 Oct 23:00","21 Oct 15:00","22 Oct 08:00","23 Oct 01:00"];

let seed = 17;
function rnd(n){
  seed = (seed * 16807) % 2147483647;
  return seed % n;
}
function rect(x,y,w,h,c){
  return `<rect x="${x}" y="${y}" width="${w}" height="${h}" fill="${c}"/>`;
}
function line(pts,c,extra){
  return `<polyline points="${pts.map(p=>p.join(",")).join(" ")}" fill="none" stroke="${c}" ${extra||""}/>`;
}
function text(x,y,s,cls){
  return `<text x="${x}" y="${y}"${cls?` class="${cls}"`:""}>${s}</text>`;
}
function valueAt(keys,x){
  for(let i=1;i<keys.length;i++){
    if(x<=keys[i][0]){
      const a=keys[i-1], b=keys[i];
      return a[1]+(b[1]-a[1])*(x-a[0])/(b[0]-a[0]);
    }
  }
  return keys[keys.length-1][1];
}

const candles = [];
for(const start in bodies){
  bodies[start].split(" ").forEach((b,i)=>{
    const p = b.split(",").map(Number);
    candles.push({x:+start+i*4, top:p[0], bot:p[1]});
  });
}

let out = "";

// period separators sit behind everything
for(const x of separators){
  for(let y=101;y<553;y+=6) out += rect(x,y,1,4,"#fff");
}

// levels
out += rect(229,278,1092,1,"#778899");
out += rect(229,294,950,1,"#ffff00");
out += rect(229,318,1092,1,"#ffff00");
out += rect(229,490,950,1,"#ffff00");
out += rect(229,491,1092,1,"#ffff00");

// moving averages go under the candles
const closes = candles.map((c,i)=>{
  const prev = i ? candles[i-1] : c;
  c.falling = (c.top+c.bot) >= (prev.top+prev.bot);
  return c.falling ? c.bot : c.top;
});
const fast = closes.map((v,i)=>{
  const s = closes.slice(Math.max(0,i-4),i+1);
  return [candles[i].x, Math.round(s.reduce((a,b)=>a+b,0)/s.length)];
});
out += line(fast,"#ff4500");
out += line(cyanLine,"#1fc8d0");
out += line(yellowLine,"#ffcc00");

// candles
candles.forEach(c=>{
  const w = wicks[c.x] || [c.top-1-rnd(12), c.bot+1+rnd(12)];
  out += rect(c.x,w[0],1,w[1]-w[0],"#00ff00");
  const h = Math.max(c.bot-c.top,2);
  out += rect(c.x-1,c.top,3,h,"#00ff00");
  if(h>2) out += rect(c.x,c.top+1,1,h-2,c.falling?"#fff":"#000");
});

// macd
for(let x=228;x<=1096;x+=4){
  const keys = x<626 ? histEarly : histKeys;
  const v = Math.round(valueAt(keys,x));
  const top = Math.min(v,530), bot = Math.max(v,530);
  out += rect(x,top,1,Math.max(bot-top,1),"#c0c0c0");
}
out += line(signalLine,"#ff0000",'stroke-dasharray="3 3"');

// frames
out += `<rect x="228.5" y="100.5" width="1093" height="392" fill="none" stroke="#fff"/>`;
out += `<rect x="228.5" y="494.5" width="1093" height="62" fill="none" stroke="#fff"/>`;
out += `<path d="M1095 101h10l-5 5z" fill="#778899"/>`;

// axes
prices.forEach((p,i)=>{
  const y = 125+i*33;
  out += rect(1322,y,3,1,"#fff");
  out += text(1327,y+4,p);
});
out += rect(1323,272,43,11,"#fff");
out += text(1327,281,"1238.60","now");
[["3.486",505],["0.00",534],["-2.593",554]].forEach(l=>{
  out += text(1325,l[1],l[0]);
});
times.forEach((t,i)=>{
  const x = 228+i*64;
  out += rect(x,557,1,4,"#fff");
  out += text(x,570,t);
});

out += text(232,113,"GOLD,H1 &#160;1238.74 1238.75 1237.68 1238.60");
out += text(232,507,"MACD(12,26,9) -1.530 -1.262");
out += text(1156,292,"261.8","lvl");
out += text(1297,316,"261.8","lvl");
out += text(1156,488,"161.8","lvl");

document.getElementById("chart").innerHTML =
  `<svg viewBox="224 98 1142 476" shape-rendering="crispEdges">${out}</svg>`;
```
